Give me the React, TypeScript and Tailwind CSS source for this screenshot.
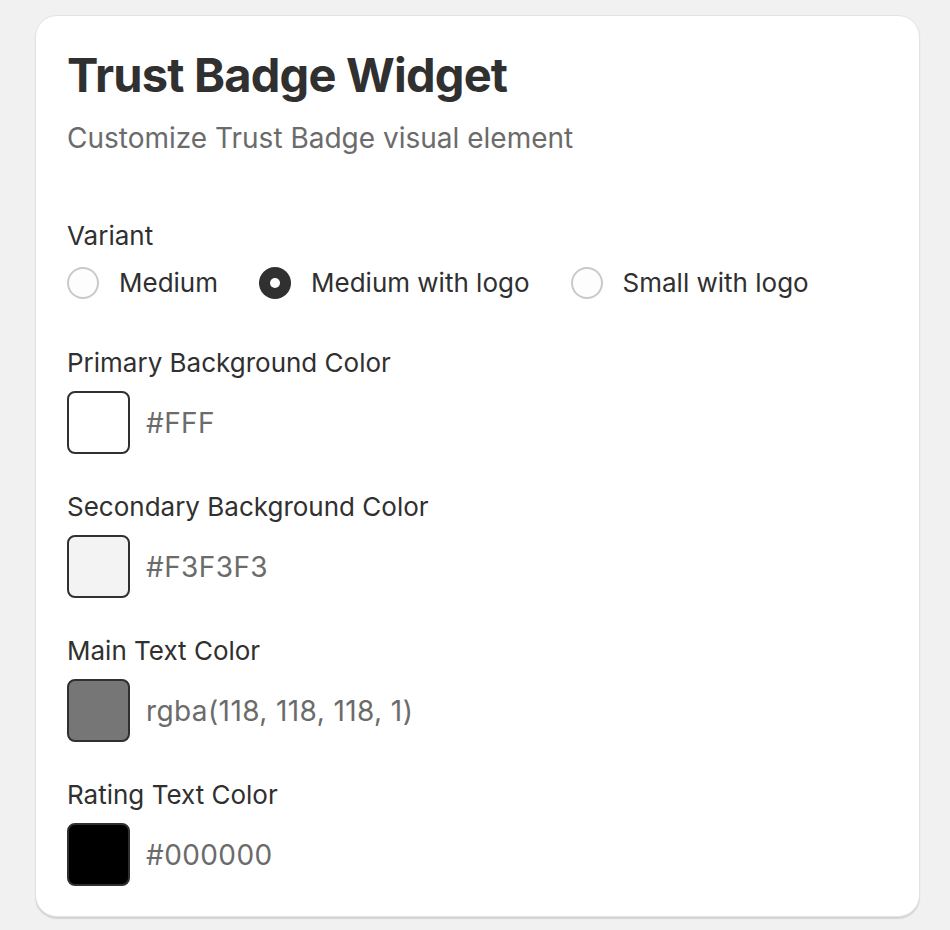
import React from 'react';

type Swatch = {
    label: string;
    color: string;
    value: string;
};

const swatches: Swatch[] = [
    { label: 'Primary Background Color', color: '#FFFFFF', value: '#FFF' },
    { label: 'Secondary Background Color', color: '#F3F3F3', value: '#F3F3F3' },
    { label: 'Main Text Color', color: 'rgba(118, 118, 118, 1)', value: 'rgba(118, 118, 118, 1)' },
    { label: 'Rating Text Color', color: '#000000', value: '#000000' },
];

const variants = ['Medium', 'Medium with logo', 'Small with logo'];

const Radio: React.FC<{ label: string; checked: boolean }> = ({ label, checked }) => (
    <label className="flex items-center gap-5 mr-[41px]">
        {checked ? (
            <span className="w-8 h-8 shrink-0 rounded-full bg-[#303030] flex items-center justify-center">
                <span className="w-[10px] h-[10px] rounded-full bg-white" />
            </span>
        ) : (
            <span className="w-8 h-8 shrink-0 rounded-full border-2 border-[#c9c9c9] bg-[#fdfdfd]" />
        )}
        <span className="text-[26px] leading-8 text-[#303030]">{label}</span>
    </label>
);

export default function App() {
    const selected = 'Medium with logo';

    return (
        <div className="min-h-[930px] bg-[#f1f1f1] pt-[15px] pl-[35px] font-['Inter','Liberation_Sans',sans-serif]">
            <div className="w-[885px] rounded-[22px] border border-[#e3e3e3] bg-white shadow-[0_2px_1px_rgba(0,0,0,0.12)] px-[31px] pt-[31px] pb-[30px]">
                <h1 className="text-[47px] leading-[56px] font-bold tracking-[-0.8px] text-[#303030]">Trust Badge Widget</h1>
                <p className="mt-[19px] text-[28px] leading-8 text-[#6b6b6b]">Customize Trust Badge visual element</p>

                <div className="mt-[66px] text-[26px] leading-8 text-[#303030]">Variant</div>
                <div className="mt-[15px] flex items-center">
                    {variants.map((v) => (
                        <Radio key={v} label={v} checked={v === selected} />
                    ))}
                </div>

                <div className="mt-[48px] flex flex-col gap-[37px]">
                    {swatches.map((s) => (
                        <div key={s.label} className="flex flex-col gap-3">
                            <div className="text-[26px] leading-8 text-[#303030]">{s.label}</div>
                            <div className="flex items-center gap-[16px]">
                                <span
                                    className="block w-[63px] h-[63px] shrink-0 rounded-lg border-2 border-[#303030]"
                                    style={{ backgroundColor: s.color }}
                                />
                                <span className="text-[28px] leading-8 tracking-[0.4px] text-[#6b6b6b]">{s.value}</span>
                            </div>
                        </div>
                    ))}
                </div>
            </div>
        </div>
    );
}
